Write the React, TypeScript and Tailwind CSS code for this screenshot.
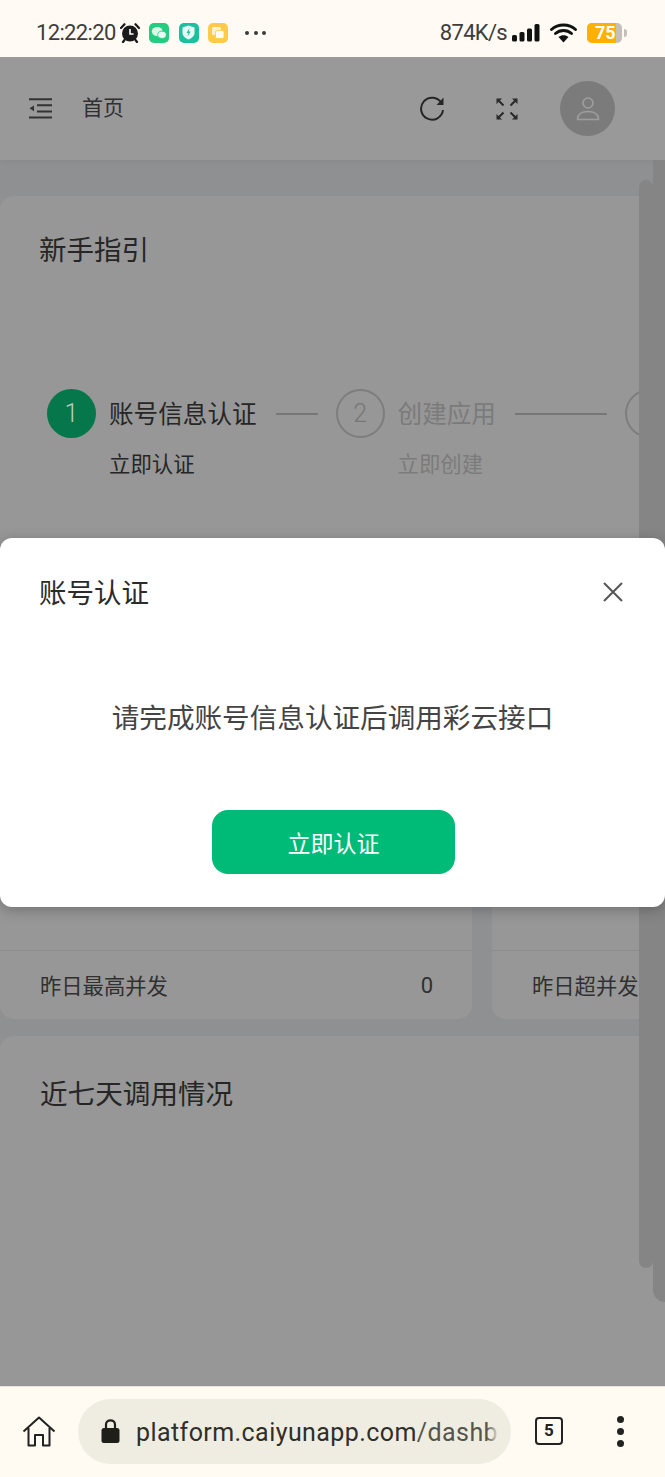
const cjk = "font-['Roboto','Noto_Sans_CJK_SC',sans-serif]";

function AlarmIcon() {
  return (
    <svg width="20" height="20" viewBox="0 0 20 20">
      <circle cx="10" cy="10.5" r="8" fill="#1a1a1a" />
      <path d="M1 5 L4.5 1.2 M19 5 L15.5 1.2 M4.5 17 L3 19 M15.5 17 L17 19" stroke="#1a1a1a" strokeWidth="2.2" strokeLinecap="round" />
      <path d="M10 6 V11 H13.5" fill="none" stroke="#fff" strokeWidth="1.6" />
    </svg>
  );
}

function AppIcon({ bg, children }: { bg: string; children: React.ReactNode }) {
  return (
    <div className={`w-5 h-5 rounded-[5px] flex items-center justify-center ${bg}`}>{children}</div>
  );
}

function StatusBar() {
  return (
    <div className={`h-[57px] shrink-0 bg-[#fffaf3] flex items-center pt-2 pl-9 pr-[38px] text-[#3d3d3d] ${cjk}`}>
      <span className="text-[22px] tracking-[-0.65px] w-[84px]">12:22:20</span>
      <AlarmIcon />
      <div className="flex gap-[9.5px] ml-[9px]">
        <AppIcon bg="bg-[#23cc7f]">
          <svg width="16" height="14" viewBox="0 0 16 14">
            <ellipse cx="6.2" cy="5.6" rx="5.4" ry="4.6" fill="#d8fbe8" />
            <ellipse cx="11" cy="8.8" rx="4.3" ry="3.6" fill="#eafff3" stroke="#23cc7f" strokeWidth="0.8" />
          </svg>
        </AppIcon>
        <AppIcon bg="bg-[#1dbf9f]">
          <svg width="13" height="15" viewBox="0 0 13 15">
            <path d="M6.5 0.5 L12.5 2.5 V8 C12.5 11 9.5 13.5 6.5 14.5 C3.5 13.5 0.5 11 0.5 8 V2.5 Z" fill="#e6faf5" />
            <path d="M7.5 3 L4.5 8 H6.4 L5.6 11.5 L8.6 6.5 H6.8 Z" fill="#1dbf9f" />
          </svg>
        </AppIcon>
        <AppIcon bg="bg-[#fdcb45]">
          <svg width="14" height="14" viewBox="0 0 14 14">
            <rect x="1" y="1" width="9" height="8" rx="1.5" fill="#fff3cf" />
            <rect x="4.5" y="4.5" width="8.5" height="8" rx="1.5" fill="#fffdf5" stroke="#fdcb45" strokeWidth="0.8" />
          </svg>
        </AppIcon>
      </div>
      <div className="flex gap-[4.5px] ml-[17px]">
        <div className="w-1 h-1 rounded-full bg-[#3a3a3a]" />
        <div className="w-1 h-1 rounded-full bg-[#3a3a3a]" />
        <div className="w-1 h-1 rounded-full bg-[#3a3a3a]" />
      </div>
      <span className="ml-auto text-[22px] tracking-[-0.7px]">874K/s</span>
      <svg className="ml-[5px]" width="28" height="18" viewBox="0 0 28 18">
        <rect x="0" y="11" width="5" height="6.5" rx="1.5" fill="#111" />
        <rect x="7.5" y="8" width="5" height="9.5" rx="1.5" fill="#111" />
        <rect x="15" y="4.5" width="5" height="13" rx="1.5" fill="#111" />
        <rect x="22.5" y="0" width="5" height="17.5" rx="1.5" fill="#111" />
      </svg>
      <svg className="ml-[10px]" width="27" height="20" viewBox="0 0 27 20">
        <path d="M1.5 6.5 C8 0.5 19 0.5 25.5 6.5 M5.5 10.5 C10 6.5 17 6.5 21.5 10.5" fill="none" stroke="#111" strokeWidth="2.8" strokeLinecap="round" />
        <path d="M8.5 14 C11.5 11.5 15.5 11.5 18.5 14 L13.5 19.5 Z" fill="#111" />
      </svg>
      <div className="ml-[10px] flex items-center">
        <div className="w-[35px] h-5 rounded-[5px] bg-[#c4c0b8] overflow-hidden relative">
          <div className="h-full w-[29px] bg-[#ffb000]" />
          <span className="absolute inset-0 pl-[8px] text-[18px] leading-5 font-bold text-white">75</span>
        </div>
        <div className="ml-[2px] w-[3px] h-2 rounded-r-sm bg-[#c4c0b8]" />
      </div>
    </div>
  );
}

function Header() {
  return (
    <header className="h-[103px] shrink-0 bg-[#999999] shadow-[0_1px_6px_rgba(0,0,0,0.06)] flex items-center pl-[29px] relative">
      <svg width="23" height="21" viewBox="0 0 23 21">
        <path d="M0 1.2 H23 M8 7.2 H23 M8 13.4 H23 M0 19.6 H23" stroke="#333" strokeWidth="2" />
        <path d="M0.5 10.3 L5 7.4 V13.2 Z" fill="#333" />
      </svg>
      <span className="ml-[30px] pb-[3px] text-[21px] text-[#303030] font-['Noto_Sans_CJK_SC',sans-serif]">首页</span>
      {/* refresh */}
      <svg className="ml-auto" width="26" height="26" viewBox="0 0 26 26" fill="none">
        <path d="M22.5 7 A11 11 0 1 0 24 14" stroke="#262626" strokeWidth="2" />
        <path d="M24.5 1.5 V9 H17.5 Z" fill="#262626" />
      </svg>
      <svg className="ml-[51px]" width="22" height="22" viewBox="0 0 22 22">
        <g stroke="#2a2a2a" strokeWidth="2" fill="none">
          <path d="M1.5 1.5 L7.5 7.5 M20.5 1.5 L14.5 7.5 M1.5 20.5 L7.5 14.5 M20.5 20.5 L14.5 14.5" />
        </g>
        <g fill="#2a2a2a">
          <path d="M0.5 0.5 H6 L0.5 6 Z M21.5 0.5 H16 L21.5 6 Z M0.5 21.5 H6 L0.5 16 Z M21.5 21.5 H16 L21.5 16 Z" />
        </g>
      </svg>
      <div className="ml-[42px] mr-[50px] w-[55px] h-[55px] rounded-full bg-[#7b7b7b] flex items-center justify-center">
        <svg width="24" height="25" viewBox="0 0 24 25" fill="none" stroke="#9e9e9e" strokeWidth="1.6">
          <circle cx="12" cy="7" r="5" />
          <path d="M1.5 23.5 C1.5 18.5 5.5 15.5 12 15.5 C18.5 15.5 22.5 18.5 22.5 23.5 Z" strokeLinejoin="round" />
        </svg>
      </div>
    </header>
  );
}

function Step({ n, title, action, active, lineWidth }: { n: string; title: string; action: string; active?: boolean; lineWidth: string }) {
  return (
    <div className="shrink-0">
      <div className="flex items-center">
        <div
          className={`w-[49px] h-[49px] rounded-full flex items-center justify-center text-[25px] font-light font-['Roboto',sans-serif] ${
            active ? "bg-[#05774a] text-[#b5cfc3]" : "border-2 border-[#7d7d7d] text-[#777777]"
          }`}
        >
          {n}
        </div>
        <span className={`ml-[13px] pb-1 text-[24.6px] leading-[34px] ${active ? "text-[#262626]" : "text-[#7b7b7b]"}`}>{title}</span>
        <div className={`ml-[19px] mr-[18px] h-[2px] bg-[#777777] ${lineWidth}`} />
      </div>
      <div className={`ml-[62px] mt-2 text-[21.4px] leading-[34px] ${active ? "text-[#262626]" : "text-[#7b7b7b]"}`}>{action}</div>
    </div>
  );
}

function StatRow({ label, value }: { label: string; value?: string }) {
  return (
    <div className="h-[69px] border-t border-[#8c8c8c] flex items-center justify-between pl-10 pr-[39px] text-[21.3px] text-[#303030] whitespace-nowrap">
      <span>{label}</span>
      {value && <span className="font-['Roboto',sans-serif] text-[22px]">{value}</span>}
    </div>
  );
}

function Page() {
  return (
    <div className="flex-1 min-h-0 relative bg-[#8f9092] overflow-hidden flex flex-col font-['Noto_Sans_CJK_SC',sans-serif]">
      <Header />
      <main className="pt-9 flex flex-col gap-[17px] w-[1000px]">
        <section className="h-[444px] bg-[#979797] rounded-[14px] pl-[39px] pt-8">
          <h2 className="text-[27.5px] leading-10 text-[#262626]">新手指引</h2>
          <div className="mt-[121px] pl-2 flex">
            <Step n="1" title="账号信息认证" action="立即认证" active lineWidth="w-[42px]" />
            <Step n="2" title="创建应用" action="立即创建" lineWidth="w-[92px]" />
            <div className="w-[49px] h-[49px] rounded-full border-2 border-[#7d7d7d]" />
          </div>
        </section>
        <div className="h-[362px] flex gap-5 items-stretch">
          <div className="w-[472px] bg-[#979797] rounded-[14px] flex flex-col justify-end overflow-hidden">
            <StatRow label="昨日最高并发" value="0" />
          </div>
          <div className="w-[472px] bg-[#979797] rounded-[14px] flex flex-col justify-end overflow-hidden">
            <StatRow label="昨日超并发" />
          </div>
        </div>
        <section className="h-[400px] bg-[#979797] rounded-[14px] pl-10 pt-[38px]">
          <h2 className="text-[27.6px] leading-9 text-[#262626]">近七天调用情况</h2>
        </section>
      </main>
      {/* scrollbars sit over the page */}
      <div className="absolute left-[639px] top-[123px] w-[14px] h-[1088px] rounded-full bg-[#858585]" />
      <div className="absolute left-[653px] top-[103px] w-[12px] h-[1142px] rounded-bl-xl bg-[#858585]" />
      {/* dialog */}
      <div className="absolute left-0 right-0 top-[481px] h-[369px] rounded-[12px] bg-white shadow-[0_3px_14px_rgba(0,0,0,0.25)] flex flex-col">
        <div className="flex items-center justify-between pl-[39px] pr-[41px] pt-[31px] h-[76px] shrink-0">
          <span className="text-[27.5px] text-[#2b2b2b]">账号认证</span>
          <svg width="22" height="22" viewBox="0 0 22 22" stroke="#555" strokeWidth="2">
            <path d="M2 2 L20 20 M20 2 L2 20" />
          </svg>
        </div>
        <p className="mt-[82px] text-center text-[27.6px] leading-[40px] text-[#444]">请完成账号信息认证后调用彩云接口</p>
        <button className="mt-[74px] ml-[212px] w-[243px] h-[64px] rounded-[16px] bg-[#00bb77] text-white text-[23px]">立即认证</button>
      </div>
    </div>
  );
}

function BrowserBar() {
  return (
    <div className="h-[91px] shrink-0 bg-[#fffbf3] border-t border-[#e6e3e0] flex items-center pb-[2px] pl-[22px] pr-[41px]">
      <svg width="34" height="31" viewBox="0 0 34 31" fill="none" stroke="#222" strokeWidth="2" strokeLinejoin="round">
        <path d="M1.5 15.5 L17 1.5 L32.5 15.5 M6.5 12 V29.5 H13 V19 H21 V29.5 H27.5 V12" />
      </svg>
      <div className="ml-[22px] w-[433px] h-[65px] rounded-full bg-[#efede1] flex items-center pl-[23px] overflow-hidden">
        <svg width="19" height="26" viewBox="0 0 19 26" className="shrink-0">
          <path d="M5 11 V6.5 C5 1 14 1 14 6.5 V11" fill="none" stroke="#1f1f1a" strokeWidth="2.2" />
          <rect x="0.5" y="10" width="18" height="15" rx="2.5" fill="#1f1f1a" />
        </svg>
        <span className="relative ml-4 mt-1 w-[363px] overflow-hidden whitespace-nowrap text-[25px] leading-[34px] tracking-[0.42px] font-['Roboto',sans-serif] text-[#2f2f2a]">
          platform.caiyunapp.com<span className="text-[#55554d]">/dashbo</span>
          <span className="absolute right-0 top-0 bottom-0 w-3 bg-gradient-to-r from-transparent to-[#efede1]" />
        </span>
      </div>
      <div className="ml-6 w-[28px] h-[28px] rounded-[4px] border-2 border-[#222] flex items-center justify-center text-[17px] font-bold font-['Roboto',sans-serif] text-[#222]">5</div>
      <div className="ml-auto flex flex-col gap-[5px]">
        <div className="w-[7px] h-[7px] rounded-full bg-[#222]" />
        <div className="w-[7px] h-[7px] rounded-full bg-[#222]" />
        <div className="w-[7px] h-[7px] rounded-full bg-[#222]" />
      </div>
    </div>
  );
}

export default function App() {
  return (
    <div className="h-[1477px] w-[665px] overflow-hidden flex flex-col">
      <StatusBar />
      <Page />
      <BrowserBar />
    </div>
  );
}
